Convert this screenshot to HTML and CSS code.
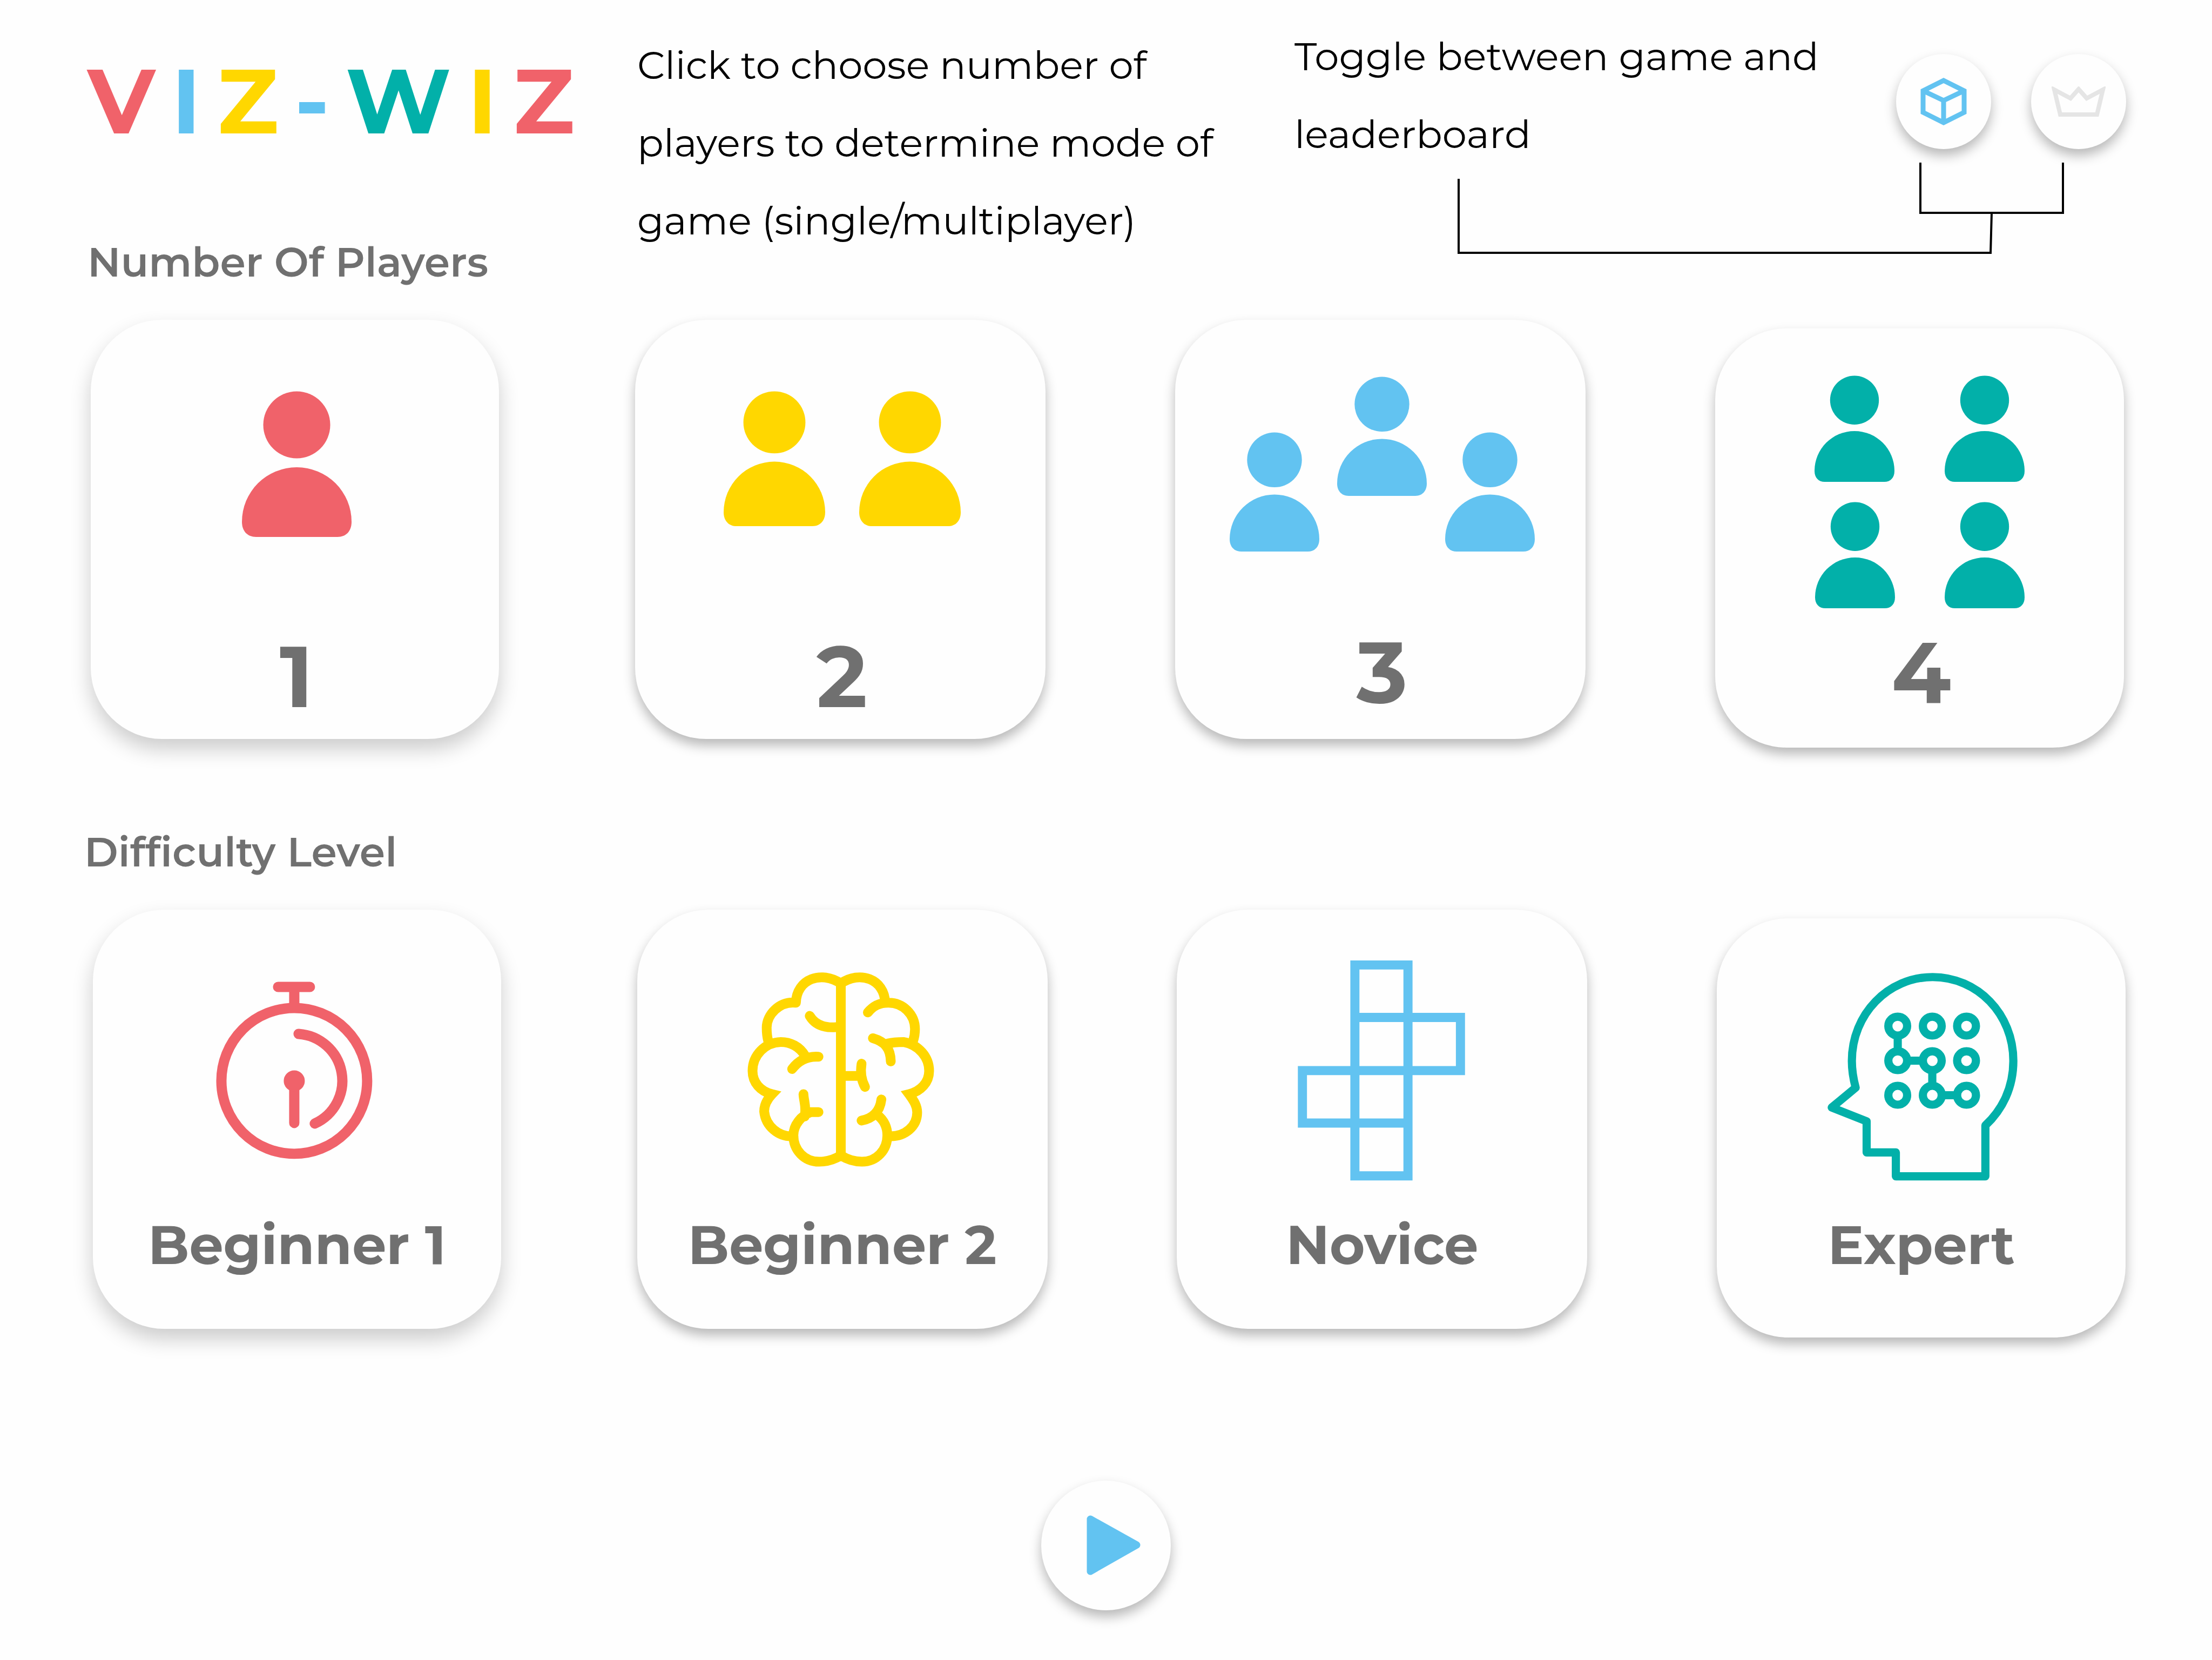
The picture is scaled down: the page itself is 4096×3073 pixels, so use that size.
FILE: index.html
```html
<!DOCTYPE html>
<html lang="en">
<head>
<meta charset="utf-8">
<meta name="viewport" content="width=device-width, initial-scale=1">
<title>Viz-Wiz</title>
<link rel="stylesheet" href="styles.css">
</head>
<body>
<svg class="symbols" aria-hidden="true">
  <symbol id="person" viewBox="0 0 203 271">
    <circle cx="101.500" cy="62.500" r="62"/>
    <path d="M0 242A101.500 101 0 0 1 203 242C203 259 193 270 177 270H26C10 270 0 259 0 242Z"/>
  </symbol>
</svg>

<header class="intro">
  <div class="brand">
    <h1 class="logo" aria-label="VIZ-WIZ">
      <span class="red">V</span><span class="blue">I</span><span class="yellow">Z</span><span class="blue">-</span><span class="teal">W</span><span class="yellow">I</span><span class="red">Z</span>
    </h1>
    <h2 class="heading" id="players-heading">Number Of Players</h2>
  </div>
  <p class="note note--players">Click to choose number of<br>players to determine mode of<br>game (single/multiplayer)</p>
  <p class="note note--views">Toggle between game and<br>leaderboard</p>
  <nav class="views" aria-label="Views">
    <button class="round" type="button" aria-label="Game" aria-pressed="true">
      <svg class="icon-cube blue" viewBox="0 0 86 88"><path d="M43 5L81 24V64L43 83L5 64V24ZM5 24L43 42L81 24M43 42V83"/></svg>
    </button>
    <button class="round" type="button" aria-label="Leaderboard" aria-pressed="false">
      <svg class="icon-crown" viewBox="0 0 100 56"><path d="M5 6L35 22L50 5L65 22L95 6L84 52H16Z"/></svg>
    </button>
  </nav>
  <svg class="connector" viewBox="0 0 1123 170" aria-hidden="true"><path d="M2 30V167H987L989 93M857 0V93H1121V0"/></svg>
</header>

<main>
  <section class="cards cards--players" aria-labelledby="players-heading">
    <button class="card card--soft" type="button">
      <svg class="art red" viewBox="0 0 756 580"><use href="#person" x="280" y="132" width="203" height="271"/></svg>
      <span class="number">1</span>
    </button>
    <button class="card" type="button">
      <svg class="art yellow" viewBox="0 0 760 580">
        <use href="#person" x="164" y="132" width="188" height="251"/>
        <use href="#person" x="415" y="132" width="188" height="251"/>
      </svg>
      <span class="number">2</span>
    </button>
    <button class="card" type="button">
      <svg class="art blue" viewBox="0 0 760 572">
        <use href="#person" x="101" y="208" width="166" height="222"/>
        <use href="#person" x="300" y="105" width="166" height="222"/>
        <use href="#person" x="500" y="208" width="166" height="222"/>
      </svg>
      <span class="number">3</span>
    </button>
    <button class="card card--low" type="button">
      <svg class="art teal" viewBox="0 0 757 556">
        <use href="#person" x="184" y="87" width="148" height="198"/>
        <use href="#person" x="425" y="87" width="148" height="198"/>
        <use href="#person" x="185" y="321" width="148" height="198"/>
        <use href="#person" x="425" y="321" width="148" height="198"/>
      </svg>
      <span class="number">4</span>
    </button>
  </section>

  <h2 class="heading heading--level" id="level-heading">Difficulty Level</h2>
  <section class="cards cards--levels" aria-labelledby="level-heading">
    <button class="card card--soft" type="button">
      <svg class="art line red" viewBox="0 0 756 556" stroke-width="19" stroke-linecap="round">
        <circle cx="373" cy="317" r="135"/>
        <path d="M343 143H402M373 143V176M381 230A87 87 0 0 1 411 396M373 317V395"/>
        <circle cx="373" cy="317" r="10"/>
      </svg>
      <span class="level">Beginner 1</span>
    </button>
    <button class="card" type="button">
      <svg class="art line yellow" viewBox="83 90 1306 956" stroke-width="31" stroke-linecap="round">
        <path d="M731 325V875M731 325C670 283 590 310 588 386M588 386C535 380 495 425 495 465Q495 490 500 508M618 556C600 525 570 511 540 511A92 92 0 0 0 450 603C450 640 475 668 512 677C490 700 487 718 487 732A88 88 0 0 0 580 811"/>
        <path d="M660 734H635C605 745 580 775 580 808C580 855 615 892 662 892C690 892 712 884 731 872M612 677C613 700 622 715 616 748"/>
        <path d="M660 558C630 556 600 565 576 597M632 428C645 450 670 467 715 464"/>
        <path d="M731 325C790 283 870 310 872 386M817 417C835 395 855 386 882 386A84 84 0 0 1 967 470Q967 490 961 508M880 516C900 511 915 511 930 511C980 520 1012 560 1012 603C1012 640 985 668 948 677C965 700 974 715 974 735C974 780 935 811 890 811"/>
        <path d="M847 743C870 760 879 785 879 808C879 855 845 892 798 892C770 892 750 884 731 872M797 761C830 755 855 735 860 694"/>
        <path d="M833 499C870 510 889 530 890 573M745 619H792M797 580C793 605 795 630 808 654"/>
      </svg>
      <span class="level">Beginner 2</span>
    </button>
    <button class="card" type="button">
      <svg class="art line blue" viewBox="84 90 1306 956" stroke-width="29">
        <path d="M651 266H820V937H651ZM651 433H987V602H484V769H820"/>
      </svg>
      <span class="level">Novice</span>
    </button>
    <button class="card card--low" type="button">
      <svg class="art line teal" viewBox="86 116 1301 928" stroke-width="26" stroke-linejoin="round">
        <path d="M528 655C520 625 516 598 516 570C516 420 632 303 773 303C916 303 1030 420 1030 570C1030 655 995 725 941 775V937H656V861H563V762L452 718Z"/>
        <path d="M662 490V538M693 569H741M772 600V648M803 679H850"/>
        <circle cx="662" cy="459" r="30"/><circle cx="772" cy="459" r="30"/><circle cx="881" cy="459" r="30"/>
        <circle cx="662" cy="569" r="30"/><circle cx="772" cy="569" r="30"/><circle cx="881" cy="569" r="30"/>
        <circle cx="662" cy="679" r="30"/><circle cx="772" cy="679" r="30"/><circle cx="881" cy="679" r="30"/>
      </svg>
      <span class="level">Expert</span>
    </button>
  </section>

  <div class="start">
    <button class="round round--play" type="button" aria-label="Play">
      <svg class="icon-play blue" viewBox="0 0 240 240"><path d="M91 71L177 119L91 168Z"/></svg>
    </button>
  </div>
</main>
</body>
</html>
```
FILE: styles.css
```css
* {
  box-sizing: border-box;
}

body {
  margin: 0;
  background: #fefefe;
  color: #000;
  font-family: Montserrat, Inter, sans-serif;
}

h1, h2, p {
  margin: 0;
}

button {
  padding: 0;
  border: 0;
  background: #fefefe;
  color: #707070;
  font: inherit;
  cursor: pointer;
}

svg {
  display: block;
}

.symbols {
  position: absolute;
  width: 0;
  height: 0;
}

.red { color: #f0626a; }
.blue { color: #62c3f1; }
.yellow { color: #ffd700; }
.teal { color: #02b0a9; }

/* Header */
.intro {
  position: relative;
  display: grid;
  grid-template-columns: 1018fr 1217fr 1114fr 426px;
  align-items: start;
  padding: 0 159px 0 162px;
}

.brand {
  padding-top: 107px;
}

.logo {
  display: flex;
  gap: 30px;
  font-size: 168px;
  font-weight: 700;
  line-height: 160px;
}

.heading {
  color: #707070;
  font-size: 76px;
  font-variant-ligatures: none;
  font-weight: 600;
  line-height: 80px;
}

.brand .heading {
  padding-top: 178px;
}

.note {
  font-size: 72px;
  line-height: 144px;
  white-space: nowrap;
}

.note--players {
  padding-top: 48px;
}

.note--views {
  padding-top: 32px;
}

.views {
  display: flex;
  justify-content: space-between;
  padding-top: 100px;
}

.connector {
  position: absolute;
  top: 301px;
  right: 274px;
  width: 1123px;
  fill: none;
  stroke: #000;
  stroke-width: 4px;
}

.round {
  display: grid;
  place-items: center;
  width: 176px;
  height: 176px;
  border-radius: 50%;
  box-shadow: 0 12px 22px rgba(0, 0, 0, 0.28);
}

.round--play {
  width: 240px;
  height: 240px;
}

.icon-cube {
  width: 86px;
  fill: none;
  stroke: currentColor;
  stroke-width: 9px;
}

.icon-crown {
  width: 100px;
  fill: none;
  stroke: #e5e5e5;
  stroke-width: 8px;
}

.icon-play {
  width: 240px;
  fill: currentColor;
  stroke: currentColor;
  stroke-width: 13px;
  stroke-linejoin: round;
}

/* Cards */
.cards {
  display: grid;
  grid-template-columns: 756fr 252fr 760fr 240fr 760fr 240fr 757fr;
  align-items: start;
}

.cards--players {
  padding: 67px 163px 0 168px;
}

.cards--levels {
  padding: 68px 160px 0 172px;
}

.card {
  display: flex;
  flex-direction: column;
  min-height: 776px;
  border-radius: 132px;
  box-shadow: 0 12px 22px rgba(0, 0, 0, 0.28);
  text-align: center;
}

.card:nth-child(1) { grid-column: 1; }
.card:nth-child(2) { grid-column: 3; }
.card:nth-child(3) { grid-column: 5; }
.card:nth-child(4) { grid-column: 7; }

.card--soft {
  box-shadow: 0 19px 38px rgba(0, 0, 0, 0.2);
}

.card--low {
  margin-top: 16px;
}

.art {
  width: 100%;
  fill: currentColor;
}

.line {
  fill: none;
  stroke: currentColor;
}

.number {
  padding-left: 6px;
  font-size: 160px;
  font-weight: 700;
  line-height: 160px;
}

.level {
  font-size: 100px;
  font-weight: 700;
  line-height: 128px;
}

.heading--level {
  padding: 153px 156px 0;
}

.cards--levels {
  padding-top: 67px;
}

.start {
  display: flex;
  justify-content: center;
  padding: 265px 0 92px;
}
```
